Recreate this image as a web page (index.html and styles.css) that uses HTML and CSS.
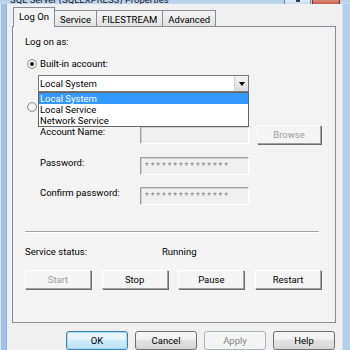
FILE: index.html
```html
<!DOCTYPE html>
<html lang="en">
<head>
    <meta charset="UTF-8">
    <meta name="viewport" content="width=device-width, initial-scale=1.0">
    <title>SQL Server (SQLEXPRESS) Properties</title>
    <link rel="stylesheet" href="styles.css">
</head>
<body>
    <div class="window">
        <div class="titlebar">
            <span class="title">SQL Server (SQLEXPRESS) Properties</span>
            <div class="caption-buttons">
                <span class="cap-btn minmax"><i class="min-mark"></i></span>
                <span class="cap-btn close"></span>
            </div>
        </div>
        <div class="client">
            <div class="tabs">
                <div class="tab active">Log On</div>
                <div class="tab">Service</div>
                <div class="tab">FILESTREAM</div>
                <div class="tab">Advanced</div>
            </div>
            <div class="panel">
                <div class="heading">Log on as:</div>
                <div class="radio-row"><span class="radio checked"></span>Built-in account:</div>
                <div class="combo">
                    <span class="combo-value">Local System</span>
                    <span class="combo-arrow"></span>
                    <ul class="combo-list">
                        <li class="selected">Local System</li>
                        <li>Local Service</li>
                        <li>Network Service</li>
                    </ul>
                </div>
                <!-- "This account" label sits under the open list -->
                <div class="radio-row second"><span class="radio"></span></div>
                <div class="field-row account">
                    <span class="field-label">Account Name:</span>
                    <span class="textbox"></span>
                    <button class="btn browse" disabled>Browse</button>
                </div>
                <div class="field-row password">
                    <span class="field-label">Password:</span>
                    <span class="textbox"><span class="stars">***************</span></span>
                </div>
                <div class="field-row confirm">
                    <span class="field-label">Confirm password:</span>
                    <span class="textbox"><span class="stars">***************</span></span>
                </div>
                <div class="separator"></div>
                <div class="status-row">
                    <span class="status-label">Service status:</span>
                    <span>Running</span>
                </div>
                <div class="service-buttons">
                    <button class="btn" disabled>Start</button>
                    <button class="btn">Stop</button>
                    <button class="btn">Pause</button>
                    <button class="btn">Restart</button>
                </div>
            </div>
            <div class="dialog-buttons">
                <button class="dlg-btn default">OK</button>
                <button class="dlg-btn">Cancel</button>
                <button class="dlg-btn" disabled>Apply</button>
                <button class="dlg-btn">Help</button>
            </div>
        </div>
    </div>
</body>
</html>
```

FILE: styles.css
```css
* {
    box-sizing: border-box;
}
body {
    margin: 0;
    font-family: Roboto, "Liberation Sans", sans-serif;
    font-size: 9.5px;
    color: #000;
}
button {
    font-family: inherit;
    font-size: inherit;
    font-weight: normal;
    color: #000;
    padding: 0;
    cursor: default;
}
.window {
    width: 350px;
    height: 350px;
    overflow: hidden;
    display: flex;
    flex-direction: column;
    background: linear-gradient(to right, #d6e4f3 0, #d6e4f3 1px, #a2c2e4 1px, #b4cfeb 100%);
}
.titlebar {
    height: 9px;
    display: flex;
    align-items: flex-start;
    overflow: hidden;
    padding-left: 10px;
    background: linear-gradient(#b7d0eb, #c2d8ee);
}
.title {
    line-height: 12px;
    margin-top: -6px;
    color: #1b1b1b;
}
.caption-buttons {
    margin-left: auto;
    margin-right: 10px;
    display: flex;
    gap: 1px;
}
.cap-btn {
    height: 6px;
    border: 1px solid #6e8bb0;
    border-top: none;
    border-radius: 0 0 3px 3px;
}
.minmax {
    width: 27px;
    position: relative;
    background: linear-gradient(#dfe9f5, #c9daee);
}
.min-mark {
    position: absolute;
    left: 11px;
    top: 0;
    width: 4px;
    height: 2px;
    background: #2d3e55;
}
.close {
    width: 28px;
    border-color: #8a3222;
    background: linear-gradient(#d98b77, #c7503b);
}
.client {
    flex: 1;
    margin: 0 8px 0 7px;
    padding: 3px 6px 0 5px;
    background: #f0f0f0;
    box-shadow: -1px 0 0 #93b3d8, 1px 0 0 #d3e3f4;
}
.tabs {
    display: flex;
    align-items: flex-end;
    height: 19px;
    margin-left: 1px;
}
.tab {
    height: 16px;
    line-height: 15px;
    padding: 1px 5px 0;
    border: 1px solid #898c95;
    border-bottom: none;
    background: linear-gradient(#f4f4f4, #e2e2e2);
}
.tab + .tab {
    margin-left: -1px;
}
.tab.active {
    height: 20px;
    line-height: 18px;
    padding: 0 5px;
    margin-bottom: -1px;
    background: #f3f3f3;
    position: relative;
    z-index: 1;
}
.panel {
    height: 297px;
    border: 1px solid #898c95;
    background: #f3f3f3;
    padding: 9px 14px 0 12px;
}
.heading {
    line-height: 12px;
}
.radio-row {
    display: flex;
    align-items: center;
    gap: 3px;
    height: 12px;
    line-height: 12px;
    margin: 10px 0 0 2px;
}
.radio-row.second {
    margin-top: 9px;
}
.radio {
    width: 10px;
    height: 10px;
    border: 1px solid #8e8f8f;
    border-radius: 50%;
    background: radial-gradient(#ffffff, #dcdcdc);
    display: flex;
    align-items: center;
    justify-content: center;
}
.radio.checked::after {
    content: "";
    width: 4px;
    height: 4px;
    border-radius: 50%;
    background: #1c1c1c;
}
.combo {
    position: relative;
    width: 211px;
    height: 17px;
    margin: 5px 0 0 13px;
    border: 1px solid #7a7a7a;
    background: #fff;
    display: flex;
    align-items: center;
}
.combo-value {
    padding-left: 1px;
}
.combo-arrow {
    margin-left: auto;
    width: 14px;
    height: 15px;
    background: linear-gradient(#f3f3f3, #dedede);
    border-left: 1px solid #d0d0d0;
    display: flex;
    align-items: center;
    justify-content: center;
}
.combo-arrow::after {
    content: "";
    border-left: 3px solid transparent;
    border-right: 3px solid transparent;
    border-top: 4px solid #000;
}
.combo-list {
    position: absolute;
    top: 16px;
    left: -1px;
    width: 211px;
    margin: 0;
    padding: 0;
    list-style: none;
    background: #fff;
    border: 1px solid #646464;
    z-index: 2;
}
.combo-list li {
    line-height: 11px;
    padding-left: 1px;
}
.combo-list li.selected {
    background: #3399ff;
    color: #fff;
}
.field-row {
    display: flex;
    align-items: flex-start;
    margin-left: 15px;
}
.field-row.account {
    margin-top: 12px;
}
.field-row.password {
    margin-top: 13px;
}
.field-row.confirm {
    margin-top: 12px;
}
.field-label {
    width: 100px;
    line-height: 12px;
}
.account .field-label,
.account .textbox {
    margin-top: 1px;
}
.textbox {
    width: 109px;
    height: 18px;
    border: 1px solid;
    border-color: #a0a0a0 #ffffff #ffffff #a0a0a0;
    box-shadow: inset 1px 1px 0 #cfcfcf;
    background: #f0f0f0;
}
.stars {
    display: block;
    padding-left: 4px;
    font-size: 8.5px;
    letter-spacing: 2px;
    line-height: 16px;
    color: #8c8c8c;
}
.btn {
    width: 66px;
    height: 19px;
    border: 1px solid;
    border-color: #ffffff #a0a0a0 #a0a0a0 #ffffff;
    box-shadow: 1px 1px 0 #6d6d6d;
    background: #f4f4f4;
}
.btn:disabled {
    color: #a0a0a0;
}
.browse {
    width: 64px;
    margin-left: 8px;
}
.separator {
    margin: 26px 2px 0 0;
    border-top: 1px solid #a0a0a0;
    border-bottom: 1px solid #ffffff;
}
.status-row {
    display: flex;
    line-height: 12px;
    margin-top: 13px;
}
.status-label {
    width: 137px;
}
.service-buttons {
    display: flex;
    justify-content: space-between;
    margin-top: 12px;
}
.dialog-buttons {
    display: flex;
    justify-content: flex-end;
    gap: 7px;
    margin-top: 8px;
    padding-right: 1px;
}
.dlg-btn {
    width: 62px;
    height: 19px;
    border: 1px solid #707070;
    border-radius: 3px;
    background: linear-gradient(#f6f6f6 0%, #eeeeee 50%, #e2e2e2 50%, #d6d6d6 100%);
}
.dlg-btn.default {
    border-color: #3c7fb1;
    box-shadow: inset 0 0 0 1px #a6dcf5;
    background: linear-gradient(#eef7fd 0%, #e1f1fb 50%, #cdebfb 50%, #bfe3f8 100%);
}
.dlg-btn:disabled {
    border-color: #adb2b5;
    background: #f4f4f4;
    color: #838383;
}
```
